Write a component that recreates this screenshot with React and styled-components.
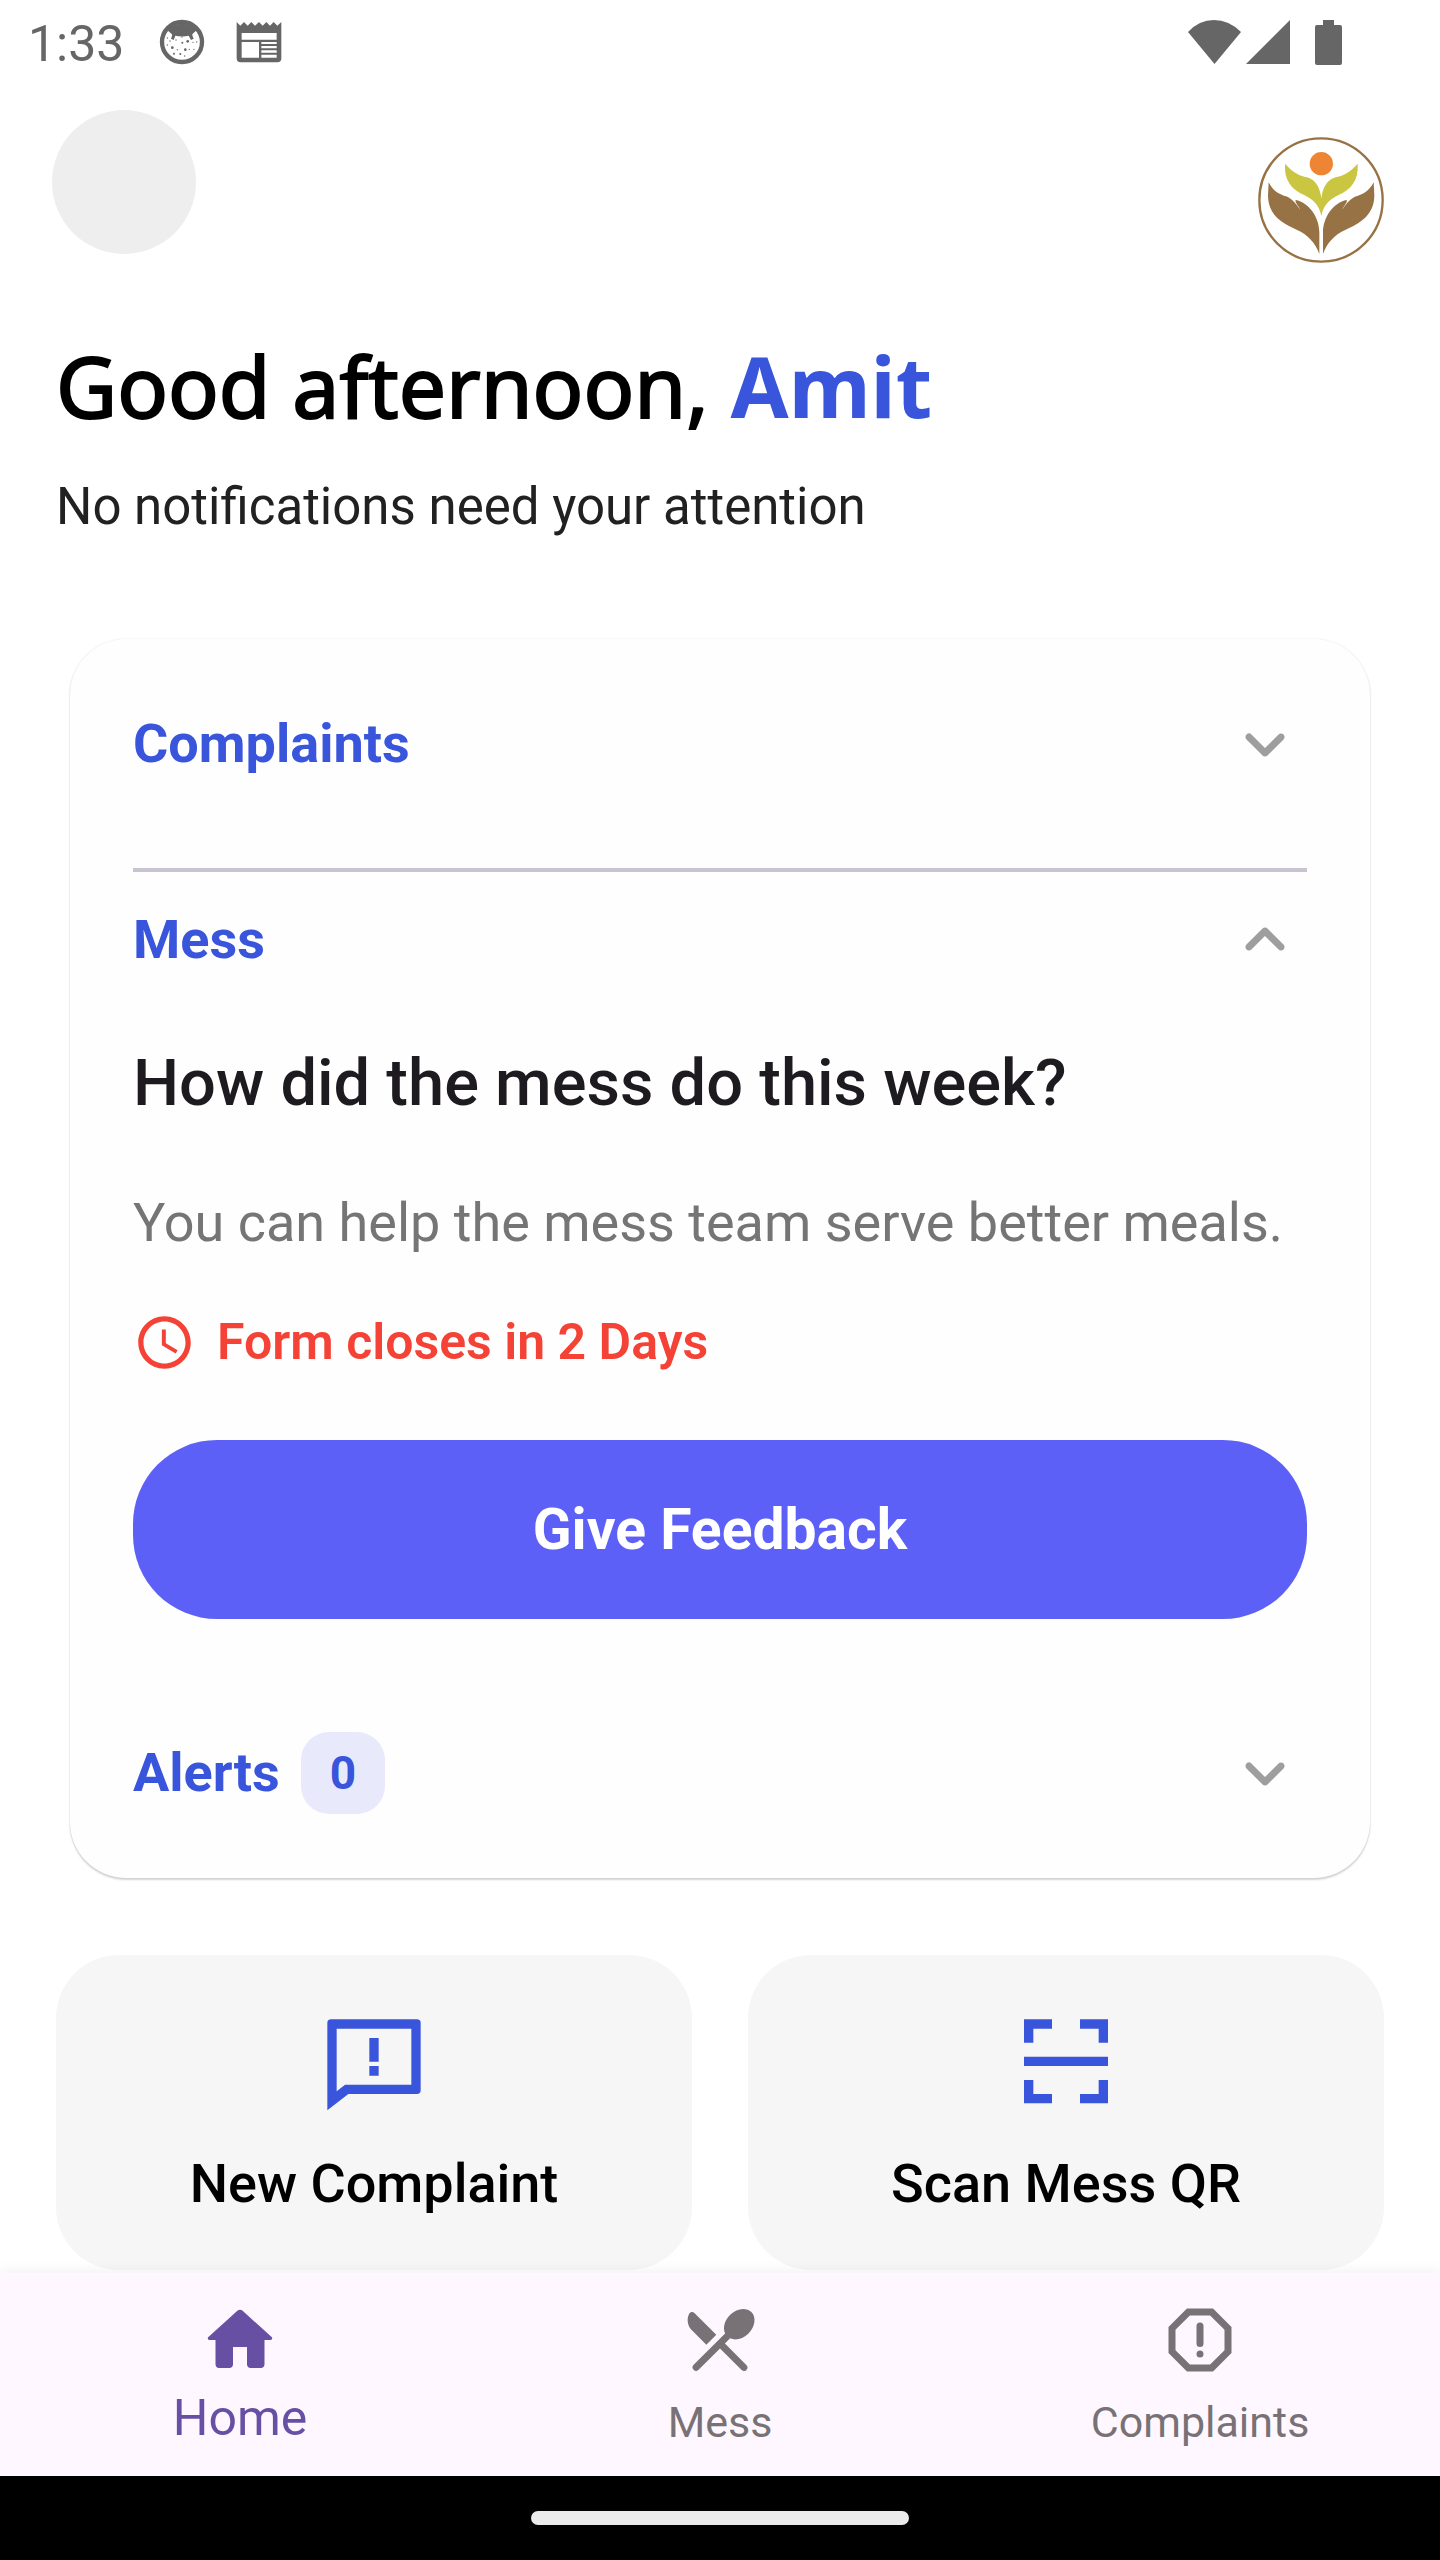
import React, { useState } from "react";
import styled, { createGlobalStyle } from "styled-components";

const color = {
  ink: "#1d1b20",
  blue: "#3955db",
  violet: "#5d60f6",
  red: "#f44336",
  grey: "#757575",
  chevron: "#9e9e9e",
  status: "#666666",
  purple: "#6750a4",
  navGrey: "#787276",
};

const GlobalStyle = createGlobalStyle`
  *, *::before, *::after { box-sizing: border-box; }
  body {
    margin: 0;
    background: #ffffff;
    font-family: Roboto, "Noto Sans", sans-serif;
    color: ${color.ink};
  }
  h1, h2, h3, p { margin: 0; }
  button { font: inherit; border: 0; padding: 0; cursor: pointer; }
  svg { display: block; flex: none; }
`;

const Screen = styled.div`
  min-height: 100vh;
  display: flex;
  flex-direction: column;
`;

const StatusBar = styled.div`
  height: 84px;
  padding: 0 98px 0 28px;
  display: flex;
  align-items: center;
  justify-content: space-between;
  color: ${color.status};
`;

const StatusGroup = styled.div`
  display: flex;
  align-items: center;
  gap: ${(p) => p.$gap}px;
`;

const Clock = styled.time`
  padding-top: 4px;
  font-size: 50px;
  line-height: 56px;
  margin-right: 4px;
`;

const Main = styled.main`
  flex: 1;
  padding: 26px 56px 0;
`;

const TopBar = styled.header`
  min-height: 153px;
  display: flex;
  justify-content: space-between;
`;

const Avatar = styled.button`
  width: 144px;
  height: 144px;
  margin-left: -4px;
  border-radius: 50%;
  background: #eeeeee;
`;

const LogoSlot = styled.div`
  align-self: flex-end;
`;

const Greeting = styled.section`
  padding-top: 67px;
  display: grid;
  gap: 30px;
`;

const Title = styled.h1`
  font-family: "Noto Sans", "Open Sans", sans-serif;
  font-size: 84px;
  line-height: 112px;
  font-weight: 400;
  color: #000000;
  -webkit-text-stroke: 2px #000000;
`;

const Name = styled.span`
  font-weight: 700;
  color: ${color.blue};
  -webkit-text-stroke: 0;
`;

const Subtitle = styled.p`
  font-size: 51px;
  line-height: 70px;
  color: #212121;
`;

const Card = styled.section`
  margin: 97px 14px 0;
  padding: 63px;
  border-radius: 56px;
  background: #fefefe;
  box-shadow: 0 0 2px rgba(0, 0, 0, 0.12), 0 2px 2px rgba(0, 0, 0, 0.16);
`;

const PanelHeader = styled.button`
  width: 100%;
  height: 84px;
  display: flex;
  align-items: center;
  justify-content: space-between;
  background: none;
  color: ${color.chevron};
`;

const PanelTitle = styled.span`
  display: flex;
  align-items: center;
  gap: 21px;
  font-size: 54px;
  line-height: 70px;
  font-weight: 700;
  color: ${color.blue};
`;

const Badge = styled.span`
  min-width: 84px;
  padding: 6px 28px;
  border-radius: 28px;
  background: #e8eafc;
  font-size: 46px;
  line-height: 70px;
  text-align: center;
`;

const Divider = styled.hr`
  height: 4px;
  margin: 82px 0 26px;
  border: 0;
  background: #cac4d0;
`;

const PanelBody = styled.div`
  padding: 59px 0 112px;
`;

const Question = styled.h2`
  font-size: 65px;
  line-height: 84px;
  font-weight: 500;
`;

const Hint = styled.p`
  margin-top: 63px;
  font-size: 54px;
  line-height: 70px;
  color: ${color.grey};
`;

const Deadline = styled.p`
  margin-top: 53px;
  display: flex;
  align-items: center;
  gap: 21px;
  font-size: 50px;
  line-height: 63px;
  font-weight: 600;
  color: ${color.red};
`;

const PrimaryButton = styled.button`
  width: 100%;
  height: 179px;
  margin-top: 66px;
  border-radius: 84px;
  background: ${color.violet};
  color: #ffffff;
  && { font-size: 57px; font-weight: 700; }
`;

const Actions = styled.section`
  margin-top: 77px;
  display: grid;
  grid-template-columns: 1fr 1fr;
  gap: 56px;
`;

const ActionTile = styled.button`
  height: 315px;
  padding-top: 55px;
  border-radius: 63px;
  display: flex;
  flex-direction: column;
  align-items: center;
  gap: 27px;
  background: #f6f6f6;
  color: ${color.blue};
`;

const ActionLabel = styled.span`
  font-size: 54px;
  line-height: 70px;
  font-weight: 500;
  color: #000000;
`;

const BottomNav = styled.nav`
  position: relative;
  height: 203px;
  padding: 25px 0 21px;
  display: grid;
  grid-template-columns: repeat(3, 1fr);
  background: #fef7ff;
  box-shadow: 0 0 14px rgba(0, 0, 0, 0.08);
`;

const NavLink = styled.a`
  display: flex;
  flex-direction: column;
  align-items: center;
  text-decoration: none;
  color: ${(p) => (p.$active ? color.purple : color.navGrey)};
  font-size: ${(p) => (p.$active ? 50 : 43)}px;
  line-height: ${(p) => (p.$active ? 72 : 80)}px;
`;

const GestureBar = styled.div`
  height: 84px;
  display: grid;
  place-items: center;
  background: #000000;
`;

const Handle = styled.div`
  width: 378px;
  height: 14px;
  border-radius: 7px;
  background: #ebebeb;
`;

const icons = {
  down:
    "M15.88 9.29L12 13.17 8.12 9.29a.9959.9959 0 0 0-1.41 0c-.39.39-.39 1.02 0 1.41l4.59 4.59c.39.39 1.02.39 1.41 0l4.59-4.59c.39-.39.39-1.02 0-1.41-.39-.38-1.03-.39-1.42 0z",
  up:
    "M11.29 8.71L6.7 13.3c-.39.39-.39 1.02 0 1.41.39.39 1.02.39 1.41 0L12 10.83l3.88 3.88c.39.39 1.02.39 1.41 0 .39-.39.39-1.02 0-1.41L12.7 8.71c-.38-.39-1.02-.39-1.41 0z",
  clock:
    "M11.99 2C6.47 2 2 6.48 2 12s4.47 10 9.99 10C17.52 22 22 17.52 22 12S17.52 2 11.99 2zM12 20c-4.42 0-8-3.58-8-8s3.58-8 8-8 8 3.58 8 8-3.58 8-8 8zm.5-13H11v6l5.25 3.15.75-1.23-4.5-2.67z",
  feedback:
    "M21.2 2H2.8a.8.8 0 0 0-.8.8v18.7L6.5 18h14.7a.8.8 0 0 0 .8-.8V2.8a.8.8 0 0 0-.8-.8zM20 16H5.8L4 17.4V4h16zM11 6h2v5.1h-2zm0 6h2v2.1h-2z",
  scan:
    "M3 2h6v2H5v3H3zM15 2h6v5h-2V4h-4zM3 10h18v2H3zM3 15h2v3h4v2H3zM21 15v5h-6v-2h4v-3z",
  home:
    "M10 19v-5h4v5c0 .55.45 1 1 1h3c.55 0 1-.45 1-1v-7h1.7c.46 0 .68-.57.33-.87L12.67 3.6c-.38-.34-.96-.34-1.34 0l-8.36 7.53c-.34.3-.13.87.33.87H5v7c0 .55.45 1 1 1h3c.55 0 1-.45 1-1z",
  mess:
    "M8.1 13.34l2.83-2.83L4.68 4.27c-.43-.43-1.15-.36-1.45.17-.78 1.38-.62 3.41.68 4.72zm6.78-1.81c1.53.71 3.68.21 5.27-1.38 1.91-1.91 2.28-4.65.81-6.12-1.46-1.46-4.2-1.1-6.12.81-1.59 1.59-2.09 3.74-1.38 5.27L4.4 19.17a1 1 0 0 0 1.41 1.41L12 14.41l6.18 6.18a1 1 0 0 0 1.41-1.41L13.41 13z",
  report:
    "M15.73 3H8.27L3 8.27v7.46L8.27 21h7.46L21 15.73V8.27zM19 14.9L14.9 19H9.1L5 14.9V9.1L9.1 5h5.8L19 9.1zM12 7a1 1 0 0 0-1 1v5a1 1 0 0 0 2 0V8a1 1 0 0 0-1-1zm0 8a1 1 0 1 0 0 2 1 1 0 0 0 0-2z",
};

function Icon({ name, size }) {
  return (
    <svg width={size} height={size} viewBox="0 0 24 24" fill="currentColor" fillRule="evenodd" aria-hidden="true">
      <path d={icons[name]} />
    </svg>
  );
}

const speckles = [
  [500, 115, 2], [500, 136, 2], [515, 144, 4], [526, 121, 2], [545, 129, 3], [561, 125, 4],
  [577, 128, 2], [588, 127, 2], [554, 150, 4], [530, 150, 2], [566, 149, 2], [580, 149, 2],
  [520, 162, 3], [539, 163, 3], [552, 169, 2], [508, 124, 2], [544, 112, 2],
];

function FaceIcon() {
  return (
    <svg width="46" height="46" viewBox="475 58 138 138" fill="currentColor" aria-hidden="true">
      <circle cx="544" cy="127" r="60" fill="none" stroke="currentColor" strokeWidth="13" />
      <path d="M500 92C520 66 568 66 588 92L576 102C573 104 576 110 579 117L571 121L564 108C552 111 536 111 524 108L519 121L511 117C514 110 516 105 513 103Z" />
      {speckles.map(([x, y, r]) => (
        <circle key={`${x}-${y}`} cx={x} cy={y} r={r} />
      ))}
    </svg>
  );
}

function NewsIcon() {
  return (
    <svg width="46" height="46" viewBox="706 58 138 138" fill="currentColor" fillRule="evenodd" aria-hidden="true">
      <path d="M708 67L719 78L730 67L741 78L752 67L763 78L775 67L786 78L797 67L808 78L819 67L830 78L842 67V176Q842 188 830 188H720Q708 188 708 176ZM723 100V120H828V100ZM723 127V174H775V127ZM782 127V133H828V127ZM782 139V146H828V139ZM782 152V159H828V152ZM782 165V174H828V165Z" />
    </svg>
  );
}

function SystemIcons() {
  return (
    <svg width="154" height="46" viewBox="0 0 154 46" fill="currentColor" role="img" aria-label="Wi-Fi, signal and battery full">
      <path d="M0 13Q11 1 26 1T53 13L26.500 45Z" />
      <path d="M58 45L102 1V45Z" />
      <path d="M135 1h11v5h6q2 0 2 2v36q0 2-2 2h-23q-2 0-2-2V8q0-2 2-2h6z" />
    </svg>
  );
}

const handPath =
  "M32 136C46 164 66 172 84 178C100 184 112 196 126 218C122 206 109 195 113 189C152 196 184 240 184 286V351C172 318 150 293 116 278C74 260 30 235 30 175Z";

function Logo() {
  return (
    <svg width="126" height="126" viewBox="0 0 378 378" role="img" aria-label="Institute logo">
      <circle cx="189" cy="189" r="185" fill="#ffffff" stroke="#977244" strokeWidth="7" />
      <circle cx="190" cy="80" r="35" fill="#ee8535" />
      <path
        d="M81 80C104 107 128 117 147 121C175 129 187 155 190 185C193 155 205 129 233 121C252 117 276 107 299 80C302 130 280 157 240 175C210 190 195 210 190 237C185 210 170 190 140 175C100 157 78 130 81 80Z"
        fill="#cac641"
      />
      <path d={handPath} fill="#977244" />
      <path d={handPath} fill="#977244" transform="translate(379 0) scale(-1 1)" />
    </svg>
  );
}

function Panel({ title, badge, open, onToggle, children }) {
  return (
    <>
      <PanelHeader type="button" aria-expanded={open} onClick={onToggle}>
        <PanelTitle>
          {title}
          {badge !== undefined && <Badge>{badge}</Badge>}
        </PanelTitle>
        <Icon name={open ? "up" : "down"} size={84} />
      </PanelHeader>
      {open && children}
    </>
  );
}

const actions = [
  { icon: "feedback", label: "New Complaint" },
  { icon: "scan", label: "Scan Mess QR" },
];

const tabs = [
  { icon: "home", label: "Home" },
  { icon: "mess", label: "Mess" },
  { icon: "report", label: "Complaints" },
];

export default function App() {
  const [open, setOpen] = useState({ complaints: false, mess: true, alerts: false });
  const [tab, setTab] = useState("Home");
  const toggle = (key) => () => setOpen((o) => ({ ...o, [key]: !o[key] }));

  return (
    <Screen>
      <GlobalStyle />
      <StatusBar>
        <StatusGroup $gap={31}>
          <Clock>1:33</Clock>
          <FaceIcon />
          <NewsIcon />
        </StatusGroup>
        <SystemIcons />
      </StatusBar>

      <Main>
        <TopBar>
          <Avatar type="button" aria-label="Profile" />
          <LogoSlot>
            <Logo />
          </LogoSlot>
        </TopBar>

        <Greeting>
          <Title>
            Good afternoon, <Name>Amit</Name>
          </Title>
          <Subtitle>No notifications need your attention</Subtitle>
        </Greeting>

        <Card>
          <Panel title="Complaints" open={open.complaints} onToggle={toggle("complaints")} />
          <Divider />
          <Panel title="Mess" open={open.mess} onToggle={toggle("mess")}>
            <PanelBody>
              <Question>How did the mess do this week?</Question>
              <Hint>You can help the mess team serve better meals.</Hint>
              <Deadline>
                <Icon name="clock" size={63} />
                Form closes in 2 Days
              </Deadline>
              <PrimaryButton type="button">Give Feedback</PrimaryButton>
            </PanelBody>
          </Panel>
          <Panel title="Alerts" badge={0} open={open.alerts} onToggle={toggle("alerts")} />
        </Card>

        <Actions>
          {actions.map((a) => (
            <ActionTile key={a.label} type="button">
              <Icon name={a.icon} size={112} />
              <ActionLabel>{a.label}</ActionLabel>
            </ActionTile>
          ))}
        </Actions>
      </Main>

      <BottomNav>
        {tabs.map((t) => (
          <NavLink
            key={t.label}
            href={`#${t.label.toLowerCase()}`}
            $active={t.label === tab}
            aria-current={t.label === tab ? "page" : undefined}
            onClick={() => setTab(t.label)}
          >
            <Icon name={t.icon} size={84} />
            {t.label}
          </NavLink>
        ))}
      </BottomNav>
      <GestureBar>
        <Handle />
      </GestureBar>
    </Screen>
  );
}
